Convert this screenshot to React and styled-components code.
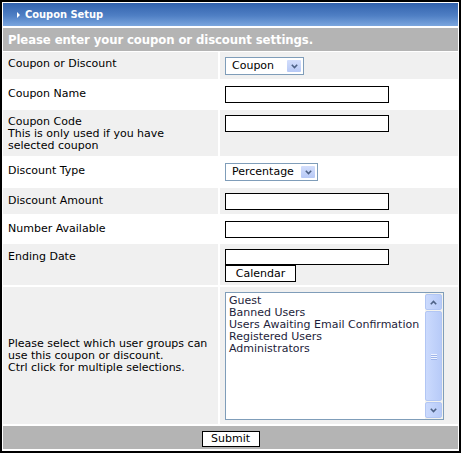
import React from "react";
import styled, { createGlobalStyle } from "styled-components";

const Global = createGlobalStyle`
  html, body {
    margin: 0;
    padding: 0;
    background: #fff;
  }
  body {
    font-family: "DejaVu Sans", Verdana, sans-serif;
    font-size: 11px;
    color: #000;
  }
`;

const Frame = styled.div`
  width: 461px;
  height: 453px;
  box-sizing: border-box;
  border: 2px solid #000;
  padding: 1px;
  background: #fff;
  display: flex;
  flex-direction: column;
  overflow: hidden;
  & > * {
    flex-shrink: 0;
  }
`;

const Header = styled.div`
  height: 23px;
  display: flex;
  align-items: center;
  gap: 5px;
  padding-left: 14px;
  background: linear-gradient(to bottom, #3262ad 0%, #4f7fc4 55%, #7ba6de 100%);
  color: #fff;
  font-weight: bold;
  font-size: 11px;
  font-stretch: condensed;
`;

const Arrow = styled.span`
  width: 0;
  height: 0;
  border-top: 3px solid transparent;
  border-bottom: 3px solid transparent;
  border-left: 3px solid #fff;
`;

const Band = styled.div`
  margin-top: 2px;
  height: 23px;
  display: flex;
  align-items: center;
  padding-left: 5px;
  background: #b4b4b4;
  color: #fff;
  font-weight: bold;
  font-size: 13px;
  font-stretch: condensed;
  letter-spacing: -0.1px;
`;

const Table = styled.div`
  margin-top: 1px;
  display: grid;
  grid-template-columns: 215px 1fr;
  gap: 2px;
`;

const Cell = styled.div`
  background: ${(p) => (p.$shade ? "#f0f0f0" : "#fff")};
  padding: 5px 5px ${(p) => p.$bottom ?? 4}px;
  line-height: 12px;
  display: flex;
  flex-direction: column;
  align-items: flex-start;
  justify-content: ${(p) => (p.$middle ? "center" : "flex-start")};
`;

const Label = styled.div`
  padding-top: ${(p) => p.$top ?? 2}px;
`;

const TextInput = styled.input`
  width: 164px;
  height: ${(p) => p.$h || 17}px;
  box-sizing: border-box;
  border: 1px solid #000;
  margin: 0;
  padding: 0 2px;
  font: inherit;
  background: #fff;
`;

const SelectWrap = styled.div`
  position: relative;
  width: ${(p) => p.$w}px;
  height: 18px;
  box-sizing: border-box;
  border: 1px solid #7f9db9;
  background: #fff;
  display: flex;
  align-items: center;
  padding-left: 6px;
  font-size: 11px;
`;

const DropButton = styled.span`
  position: absolute;
  right: 2px;
  top: 2px;
  width: 14px;
  height: 12px;
  border-radius: 1px;
  background: linear-gradient(to bottom, #d3defc, #b7c9f6);
  display: flex;
  align-items: center;
  justify-content: center;
`;

const Button = styled.button`
  height: ${(p) => p.$h || 17}px;
  box-sizing: border-box;
  border: 1px solid #000;
  background: #fff;
  margin: 0;
  padding: 0;
  font: inherit;
  font-size: 11px;
  color: #000;
  width: ${(p) => p.$w}px;
  line-height: 14px;
`;

const ListBox = styled.div`
  width: 219px;
  height: 128px;
  box-sizing: border-box;
  border: 1px solid #7f9db9;
  background: #fff;
  display: flex;
`;

const Items = styled.div`
  flex: 1;
  padding: 2px 3px;
  line-height: 12px;
  color: #1d1d3a;
`;

const ScrollBar = styled.div`
  width: 17px;
  padding: 1px 1px 1px 0;
  display: flex;
  flex-direction: column;
  gap: 1px;
  background: #f3f3ee;
`;

const ScrollBtn = styled.div`
  height: 16px;
  border: 1px solid #b2c6f4;
  border-radius: 2px;
  background: linear-gradient(to right, #cbdafd, #b8cbf8);
  display: flex;
  align-items: center;
  justify-content: center;
  box-sizing: border-box;
`;

const Thumb = styled(ScrollBtn)`
  flex: 1;
  flex-direction: column;
  gap: 1px;
`;

const Grip = styled.span`
  width: 6px;
  height: 1px;
  background: #eef3ff;
  box-shadow: 0 1px 0 #9db4ea;
`;

const SubmitBar = styled.div`
  margin-top: 2px;
  height: 23px;
  background: #b4b4b4;
  display: flex;
  justify-content: center;
  padding-top: 5px;
  box-sizing: border-box;
`;

const Chevron = ({ up }) => (
  <svg width="7" height="5" viewBox="0 0 7 5">
    <path
      d={up ? "M0.8 4.2 L3.5 1.5 L6.2 4.2" : "M0.8 0.8 L3.5 3.5 L6.2 0.8"}
      fill="none"
      stroke="#4d6185"
      strokeWidth="1.6"
    />
  </svg>
);

const Select = ({ value, width }) => (
  <SelectWrap $w={width}>
    {value}
    <DropButton>
      <Chevron />
    </DropButton>
  </SelectWrap>
);

const groups = [
  "Guest",
  "Banned Users",
  "Users Awaiting Email Confirmation",
  "Registered Users",
  "Administrators",
];

export default function App() {
  return (
    <>
      <Global />
      <Frame>
        <Header>
          <Arrow />
          Coupon Setup
        </Header>
        <Band>Please enter your coupon or discount settings.</Band>
        <Table>
          <Cell $shade>
            <Label $top={1}>Coupon or Discount</Label>
          </Cell>
          <Cell $shade>
            <Select value="Coupon" width={79} />
          </Cell>

          <Cell $bottom={5}>
            <Label>Coupon Name</Label>
          </Cell>
          <Cell $bottom={5}>
            <TextInput />
          </Cell>

          <Cell $shade>
            <Label $top={1}>
              Coupon Code
              <br />
              This is only used if you have
              <br />
              selected coupon
            </Label>
          </Cell>
          <Cell $shade>
            <TextInput />
          </Cell>

          <Cell $bottom={5}>
            <Label>Discount Type</Label>
          </Cell>
          <Cell $bottom={5}>
            <Select value="Percentage" width={93} />
          </Cell>

          <Cell $shade>
            <Label>Discount Amount</Label>
          </Cell>
          <Cell $shade>
            <TextInput />
          </Cell>

          <Cell>
            <Label>Number Available</Label>
          </Cell>
          <Cell>
            <TextInput />
          </Cell>

          <Cell $shade $bottom={3}>
            <Label>Ending Date</Label>
          </Cell>
          <Cell $shade $bottom={3}>
            <TextInput $h={16} />
            <Button $w={71}>Calendar</Button>
          </Cell>

          <Cell $shade $middle>
            <Label $top={0}>
              Please select which user groups can
              <br />
              use this coupon or discount.
              <br />
              Ctrl click for multiple selections.
            </Label>
          </Cell>
          <Cell $shade>
            <ListBox>
              <Items>
                {groups.map((g) => (
                  <div key={g}>{g}</div>
                ))}
              </Items>
              <ScrollBar>
                <ScrollBtn>
                  <Chevron up />
                </ScrollBtn>
                <Thumb>
                  <Grip />
                  <Grip />
                  <Grip />
                </Thumb>
                <ScrollBtn>
                  <Chevron />
                </ScrollBtn>
              </ScrollBar>
            </ListBox>
          </Cell>
        </Table>
        <SubmitBar>
          <Button $w={58} $h={16}>Submit</Button>
        </SubmitBar>
      </Frame>
    </>
  );
}
